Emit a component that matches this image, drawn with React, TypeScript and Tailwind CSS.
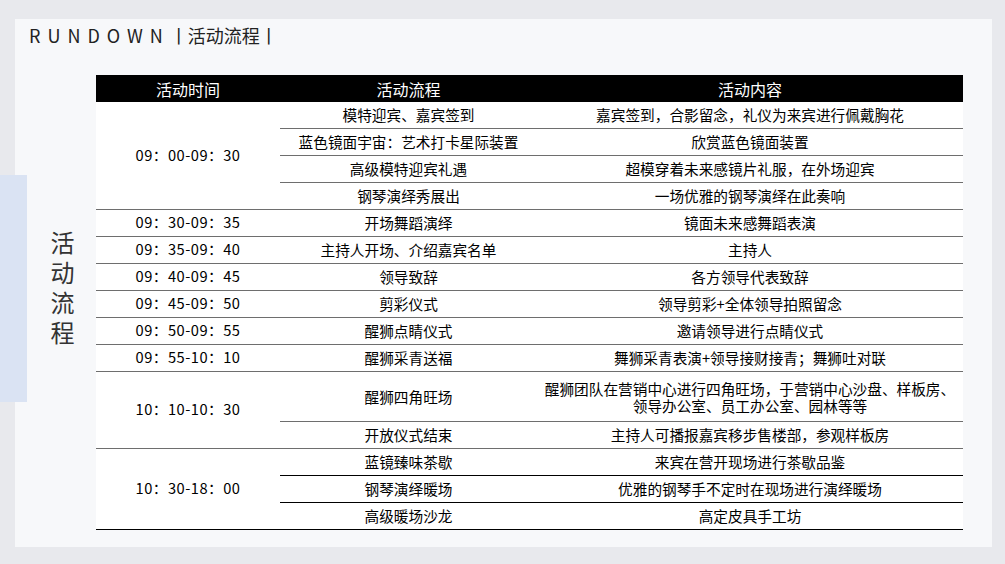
type Item = { name: string; desc: string[]; tall?: boolean };
type Group = { time: string; items: Item[] };

const groups: Group[] = [
  {
    time: "09：00-09：30",
    items: [
      { name: "模特迎宾、嘉宾签到", desc: ["嘉宾签到，合影留念，礼仪为来宾进行佩戴胸花"] },
      { name: "蓝色镜面宇宙：艺术打卡星际装置", desc: ["欣赏蓝色镜面装置"] },
      { name: "高级模特迎宾礼遇", desc: ["超模穿着未来感镜片礼服，在外场迎宾"] },
      { name: "钢琴演绎秀展出", desc: ["一场优雅的钢琴演绎在此奏响"] },
    ],
  },
  { time: "09：30-09：35", items: [{ name: "开场舞蹈演绎", desc: ["镜面未来感舞蹈表演"] }] },
  { time: "09：35-09：40", items: [{ name: "主持人开场、介绍嘉宾名单", desc: ["主持人"] }] },
  { time: "09：40-09：45", items: [{ name: "领导致辞", desc: ["各方领导代表致辞"] }] },
  { time: "09：45-09：50", items: [{ name: "剪彩仪式", desc: ["领导剪彩+全体领导拍照留念"] }] },
  { time: "09：50-09：55", items: [{ name: "醒狮点睛仪式", desc: ["邀请领导进行点睛仪式"] }] },
  { time: "09：55-10：10", items: [{ name: "醒狮采青送福", desc: ["舞狮采青表演+领导接财接青；舞狮吐对联"] }] },
  {
    time: "10：10-10：30",
    items: [
      {
        name: "醒狮四角旺场",
        desc: ["醒狮团队在营销中心进行四角旺场，于营销中心沙盘、样板房、", "领导办公室、员工办公室、园林等等"],
        tall: true,
      },
      { name: "开放仪式结束", desc: ["主持人可播报嘉宾移步售楼部，参观样板房"] },
    ],
  },
  {
    time: "10：30-18：00",
    items: [
      { name: "蓝镜臻味茶歇", desc: ["来宾在营开现场进行茶歇品鉴"] },
      { name: "钢琴演绎暖场", desc: ["优雅的钢琴手不定时在现场进行演绎暖场"] },
      { name: "高级暖场沙龙", desc: ["高定皮具手工坊"] },
    ],
  },
];

const font = { fontFamily: '"Noto Sans CJK SC", "Noto Sans", sans-serif' };

function GroupRows({ group, last }: { group: Group; last: boolean }) {
  const line = last ? "border-black" : "border-[#6e6e6e]";
  return (
    <div className="flex">
      <div
        className={`w-[184px] shrink-0 flex items-center justify-center pb-[2px] tracking-[0.5px] border-b ${line}`}
      >
        {group.time}
      </div>
      <div className="flex flex-col flex-1">
        {group.items.map((it) => (
          <div
            key={it.name}
            className={`flex border-b ${line} ${it.tall ? "h-[50px]" : "h-[27px] pb-px"}`}
          >
            <div className="w-[257px] shrink-0 flex items-center justify-center whitespace-nowrap">
              {it.name}
            </div>
            <div className="flex-1 flex flex-col items-center justify-center whitespace-nowrap leading-[17px]">
              {it.desc.map((d) => (
                <span key={d}>{d}</span>
              ))}
            </div>
          </div>
        ))}
      </div>
    </div>
  );
}

export default function App() {
  return (
    <div className="relative w-[1005px] h-[564px] bg-[#e8e9ed] overflow-hidden" style={font}>
      <div className="ml-[15px] mt-[19px] w-[977px] h-[528px] bg-[#f7f8fa] flex flex-col">
        {/* title */}
        <div className="pt-[4px] pl-[14px] flex items-center h-[28px] leading-[24px] text-[18px] text-[#222]">
          <span className="tracking-[7px]">RUNDOWN</span>
          <span>丨活动流程丨</span>
        </div>

        <div className="flex mt-[28px]">
          <div className="w-[81px] shrink-0 pl-[35px] pt-[156px] text-[24px] text-[#333]">
            <span className="block [writing-mode:vertical-rl] tracking-[6px] leading-[24px]">
              活动流程
            </span>
          </div>

          <div className="w-[867px] text-[14.67px] text-black">
            <div className="flex h-[27px] bg-black text-white text-[16px]">
              <div className="w-[184px] flex items-center justify-center">活动时间</div>
              <div className="w-[257px] flex items-center justify-center">活动流程</div>
              <div className="flex-1 flex items-center justify-center">活动内容</div>
            </div>
            <div className="bg-white">
              {groups.map((g, i) => (
                <GroupRows key={g.time} group={g} last={i === groups.length - 1} />
              ))}
            </div>
          </div>
        </div>
      </div>

      {/* side accent strip */}
      <div className="absolute left-0 top-[175px] w-[27px] h-[227px] bg-[#dae3f3]" />
    </div>
  );
}
